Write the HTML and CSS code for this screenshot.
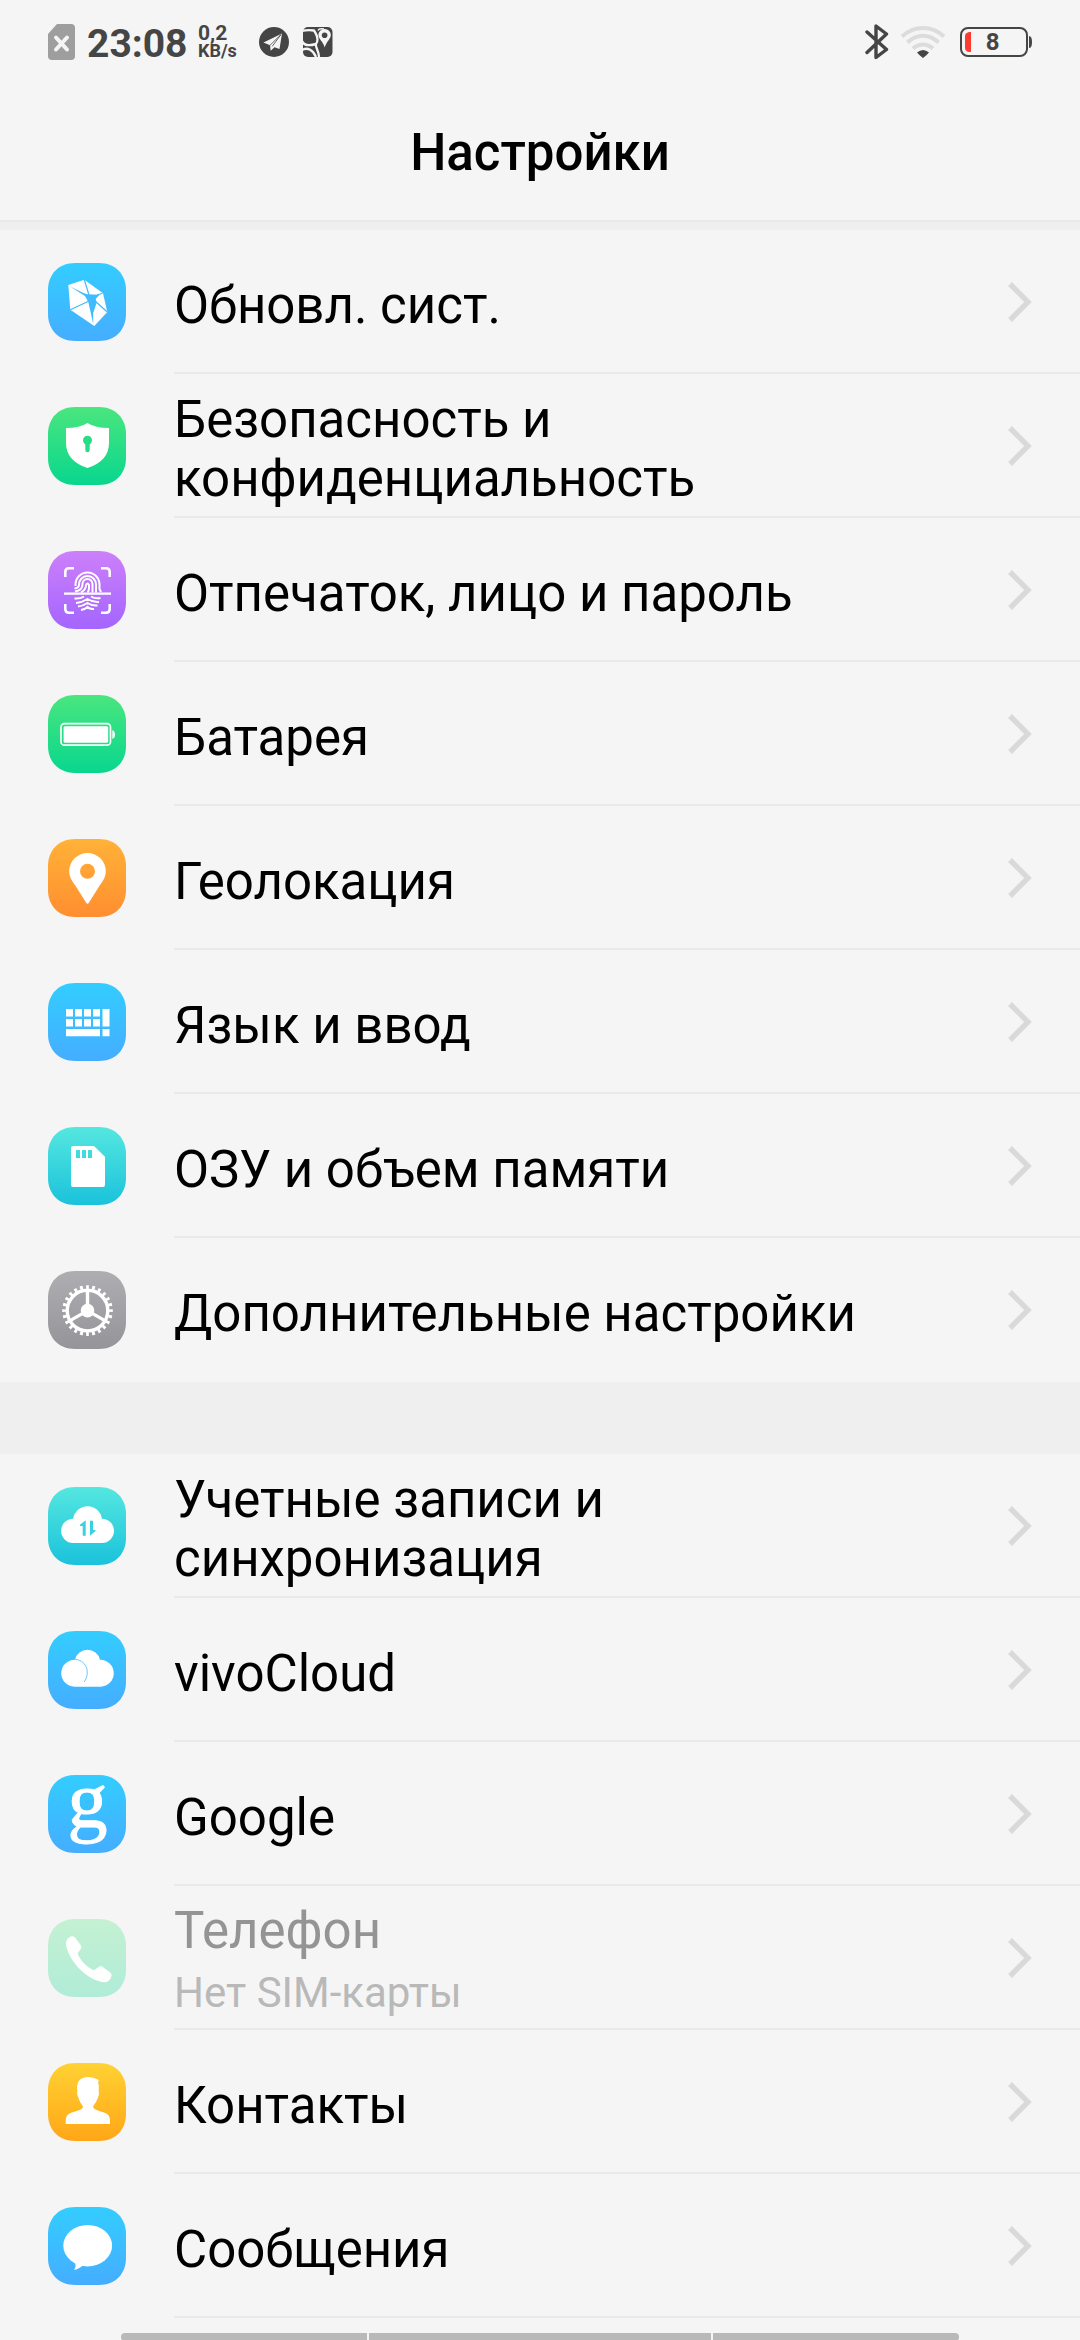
FILE: index.html
```
<!DOCTYPE html>
<html lang="ru">
<head>
    <meta charset="UTF-8">
    <meta name="viewport" content="width=device-width, initial-scale=1.0">
    <title>Настройки</title>
    <link rel="stylesheet" href="styles.css">
</head>
<body>
    <!-- shared shapes and gradients -->
    <svg class="defs" width="0" height="0">
        <defs>
            <linearGradient id="blue" x1="0" y1="0" x2="0" y2="1"><stop offset="0" stop-color="#33cdff"/><stop offset="1" stop-color="#45adff"/></linearGradient>
            <linearGradient id="green" x1="0" y1="0" x2="0" y2="1"><stop offset="0" stop-color="#4ae67e"/><stop offset="1" stop-color="#08d68e"/></linearGradient>
            <linearGradient id="purple" x1="0" y1="0" x2="0" y2="1"><stop offset="0" stop-color="#cc80fa"/><stop offset="1" stop-color="#a465ff"/></linearGradient>
            <linearGradient id="orange" x1="0" y1="0" x2="0" y2="1"><stop offset="0" stop-color="#ffb238"/><stop offset="1" stop-color="#ff8e30"/></linearGradient>
            <linearGradient id="teal" x1="0" y1="0" x2="0" y2="1"><stop offset="0" stop-color="#55e7e0"/><stop offset="1" stop-color="#1ac2db"/></linearGradient>
            <linearGradient id="gray" x1="0" y1="0" x2="0" y2="1"><stop offset="0" stop-color="#aeadb2"/><stop offset="1" stop-color="#959499"/></linearGradient>
            <linearGradient id="yellow" x1="0" y1="0" x2="0" y2="1"><stop offset="0" stop-color="#ffd233"/><stop offset="1" stop-color="#ffa617"/></linearGradient>
            <linearGradient id="pale" x1="0" y1="0" x2="0" y2="1"><stop offset="0" stop-color="#c4f1d2"/><stop offset="1" stop-color="#b0ecd8"/></linearGradient>
            <path id="tile" d="M27 0H51C67 0 78 11 78 27V51C78 67 67 78 51 78H27C11 78 0 67 0 51V27C0 11 11 0 27 0Z"/>
            <path id="arrow" d="M2 2L20 20L2 38" fill="none" stroke="#d9d9d9" stroke-width="5.4"/>
        </defs>
    </svg>

    <div class="status">
        <svg class="sim" width="27" height="36" viewBox="0 0 27 36">
            <path d="M9 0H23Q27 0 27 4V32Q27 36 23 36H4Q0 36 0 32V10Z" fill="#9e9e9e"/>
            <path d="M8 13.5L19 25.5M19 13.5L8 25.5" stroke="#f5f5f5" stroke-width="4" stroke-linecap="round"/>
        </svg>
        <span class="time">23:08</span>
        <div class="speed">
            <span class="num">0,2</span>
            <span class="unit">KB/s</span>
        </div>
        <svg class="telegram" width="30" height="30" viewBox="0 0 30 30">
            <circle cx="15" cy="15" r="15" fill="#454545"/>
            <path d="M4.5 15.5L23 6.5L20.5 22L15.5 20.2L11.7 23.7L11 18.3Z" fill="#f5f5f5"/>
            <path d="M11 18.3L22 7.5L13.2 19.4" fill="none" stroke="#454545" stroke-width="0.8"/>
        </svg>
        <svg class="maps" width="31" height="30" viewBox="0 0 31 30">
            <rect x="1" width="29.5" height="30" rx="5" fill="#454545"/>
            <path d="M0 4C4 3 8 3 12 3.5C15 8 17 13 14 17C13 20 17 24 17 30" fill="none" stroke="#f5f5f5" stroke-width="2.3"/>
            <path d="M0 14C2 19 7 19 14 17M0 23C6 20 11 23 14 30" fill="none" stroke="#f5f5f5" stroke-width="2.4"/>
            <path d="M16 3.5Q17 1 22 2" fill="none" stroke="#f5f5f5" stroke-width="1.5"/>
            <path d="M22.6 2A6 6 0 0 1 28.8 8.2C28.8 12 24.5 14 22.8 20.5C21 14 16.4 12 16.4 8.2A6 6 0 0 1 22.6 2Z" fill="#f5f5f5"/>
            <circle cx="22.6" cy="8.3" r="2.8" fill="#454545"/>
        </svg>

        <svg class="bluetooth" width="24" height="36" viewBox="0 0 24 36">
            <path d="M2 8L21.500 25.500L11 33.500V2L21.500 10L2 28.500" fill="none" stroke="#454545" stroke-width="3.400" stroke-linecap="round" stroke-linejoin="round"/>
        </svg>
        <svg class="wifi" width="46" height="34" viewBox="0 0 46 34">
            <g fill="none" stroke="#dcdcdc" stroke-width="4">
                <path d="M2 11.500C14 0 32 0 44 11.500"/>
                <path d="M7.500 17.500C17 8.500 29 8.500 38.500 17.500"/>
                <path d="M13 23.500C19 18 27 18 33 23.500"/>
            </g>
            <path d="M17 27.500Q23 22.500 29 27.500Q27 30 23 33Q19 30 17 27.500Z" fill="#454545"/>
        </svg>
        <svg class="battery" width="72" height="30" viewBox="0 0 72 30">
            <rect x="1" y="1" width="66" height="28" rx="7" fill="none" stroke="#454545" stroke-width="2"/>
            <path d="M69 9C71 9 72 11 72 15S71 21 69 21Z" fill="#454545"/>
            <path d="M11 5V25H9Q5 24 5 21V9Q5 6 9 5Z" fill="#ff3b30"/>
            <text x="32.700" y="23.300" font-size="24" font-weight="700" text-anchor="middle" fill="#454545">8</text>
        </svg>
    </div>

    <header>
        <h1>Настройки</h1>
    </header>

    <div class="list">
        <div class="row">
            <svg class="icon" viewBox="0 0 78 78">
                <use href="#tile" fill="url(#blue)"/>
                <path d="M20.300 22L36.300 16.800L55 30.300L59.300 49L46.300 63L22.300 46.700Z" fill="#fff"/>
                <path d="M22 23.500L35.500 30L39 31.300L51.500 31.800L47.700 36L48.700 39.500L45.200 50V61L42.600 49L40.300 39L37 33Z" fill="#3dbdff"/>
                <path d="M36.300 16.800L41 32M54.500 30.300L49 32M59 48.700L47 38M22.300 46.700L41 38" stroke="#3dbdff" stroke-width="1.200"/>
            </svg>
            <div class="text"><p>Обновл. сист.</p></div>
            <svg class="arrow" viewBox="0 0 24 40"><use href="#arrow"/></svg>
        </div>
        <div class="row">
            <svg class="icon" viewBox="0 0 78 78">
                <use href="#tile" fill="url(#green)"/>
                <path d="M39.500 16Q47 21 61 21V36Q61 54 39.500 61Q18 54 18 36V21Q32 21 39.500 16Z" fill="#fff"/>
                <circle cx="39.500" cy="33.300" r="4.500" fill="#27dd86"/>
                <path d="M39.500 34V43" stroke="#27dd86" stroke-width="4.400" stroke-linecap="round"/>
            </svg>
            <div class="text"><p>Безопасность и<br>конфиденциальность</p></div>
            <svg class="arrow" viewBox="0 0 24 40"><use href="#arrow"/></svg>
        </div>
        <div class="row">
            <svg class="icon" viewBox="0 0 78 78">
                <use href="#tile" fill="url(#purple)"/>
                <g fill="none" stroke="#fff" stroke-width="2.500">
                    <path d="M17.300 26V21Q17.300 17.300 21 17.300H26M53 17.300H58Q61.700 17.300 61.700 21V26M61.700 53V58Q61.700 61.700 58 61.700H53M26 61.700H21Q17.300 61.700 17.300 58V53"/>
                    <path d="M16 42.700H63" stroke-width="2.200"/>
                </g>
                <g fill="none" stroke="#fff" stroke-width="2">
                    <path d="M27.500 35V33.500A12 12 0 0 1 51.500 33.500V38L53 41M26.500 37.500Q31 37 31 33.500A8.500 8.500 0 0 1 48 33.500V41.500"/>
                    <path d="M27 40.500Q34.500 39.500 34.500 33A5 5 0 0 1 44.500 33V41.500M33 41.500Q38 38.500 38 34Q39.500 31 41 34V37Q41 40 39.500 41.500"/>
                    <path d="M26.500 47.500Q32 48 36 45.500M43 45.500Q47 48 52.500 47M28 52Q34 51.500 39.500 48Q45 51.500 51 51M30 55.500Q35 55 39.500 52Q44 55 49.500 54.500M33 59Q37 58.500 39.500 56Q42 58.500 46 58"/>
                </g>
            </svg>
            <div class="text"><p>Отпечаток, лицо и пароль</p></div>
            <svg class="arrow" viewBox="0 0 24 40"><use href="#arrow"/></svg>
        </div>
        <div class="row">
            <svg class="icon" viewBox="0 0 78 78">
                <use href="#tile" fill="url(#green)"/>
                <rect x="13" y="28.700" width="49.500" height="21.500" rx="3.500" fill="none" stroke="#fff" stroke-width="1.700"/>
                <rect x="15.600" y="31.200" width="44.600" height="16.500" rx="1.500" fill="#fff"/>
                <path d="M64.300 35Q67 36 67 39.500T64.300 44Z" fill="#fff"/>
            </svg>
            <div class="text"><p>Батарея</p></div>
            <svg class="arrow" viewBox="0 0 24 40"><use href="#arrow"/></svg>
        </div>
        <div class="row">
            <svg class="icon" viewBox="0 0 78 78">
                <use href="#tile" fill="url(#orange)"/>
                <path fill-rule="evenodd" d="M39.500 14A18.300 18.300 0 0 1 57.800 32.300C57.800 38 55 42 52 46L41 63.500Q39.500 66 38 63.500L27 46C24 42 21.200 38 21.200 32.300A18.300 18.300 0 0 1 39.500 14ZM39.500 24.800A7.500 7.500 0 0 0 39.500 39.800A7.500 7.500 0 0 0 39.500 24.800Z" fill="#fff"/>
            </svg>
            <div class="text"><p>Геолокация</p></div>
            <svg class="arrow" viewBox="0 0 24 40"><use href="#arrow"/></svg>
        </div>
        <div class="row">
            <svg class="icon" viewBox="0 0 78 78">
                <use href="#tile" fill="url(#blue)"/>
                <path d="M18 26h7v7.500h-7zM27 26h7v7.500h-7zM36 26h7v7.500h-7zM45 26h7v7.500h-7zM18 36h7v7.500h-7zM27 36h7v7.500h-7zM36 36h7v7.500h-7zM45 36h7v7.500h-7zM54.500 26h7v17.500h-7zM18 46h34v7.300h-34zM54.500 46h7v7.300h-7z" fill="#fff"/>
            </svg>
            <div class="text"><p>Язык и ввод</p></div>
            <svg class="arrow" viewBox="0 0 24 40"><use href="#arrow"/></svg>
        </div>
        <div class="row">
            <svg class="icon" viewBox="0 0 78 78">
                <use href="#tile" fill="url(#teal)"/>
                <path fill-rule="evenodd" d="M25 19H46L57 29.700V58Q57 60 55 60H25Q23 60 23 58V21Q23 19 25 19ZM28 23V31H32V23ZM34 23V31H38V23ZM40 23V31H44V23Z" fill="#fff"/>
            </svg>
            <div class="text"><p>ОЗУ и объем памяти</p></div>
            <svg class="arrow" viewBox="0 0 24 40"><use href="#arrow"/></svg>
        </div>
        <div class="row last">
            <svg class="icon" viewBox="0 0 78 78">
                <use href="#tile" fill="url(#gray)"/>
                <g fill="none" stroke="#fff">
                    <circle cx="39.500" cy="39.600" r="20.300" stroke-width="3.400"/>
                    <circle cx="39.500" cy="39.600" r="23.300" stroke-width="4" pathLength="240" stroke-dasharray="4.600 5.400" stroke-dashoffset="2.300" transform="rotate(-90 39.500 39.600)"/>
                    <path d="M39.500 39.600V19M39.500 39.600L57.300 49.900M39.500 39.600L21.700 49.900" stroke-width="3.400"/>
                </g>
                <circle cx="39.500" cy="39.600" r="6.800" fill="#fff"/>
            </svg>
            <div class="text"><p>Дополнительные настройки</p></div>
            <svg class="arrow" viewBox="0 0 24 40"><use href="#arrow"/></svg>
        </div>
    </div>

    <div class="list">
        <div class="row">
            <svg class="icon" viewBox="0 0 78 78">
                <use href="#tile" fill="url(#teal)"/>
                <path d="M25.200 31.700A14.500 14.500 0 0 1 53.900 31.700A12.150 12.150 0 0 1 53.900 56H25.200A12.150 12.150 0 0 1 25.200 31.700Z" fill="#fff"/>
                <path d="M37.700 33.300V48.700H34.700V39H32V37.700ZM42 33.700H45V43H47.500V44L42 48.700Z" fill="#36d3de"/>
            </svg>
            <div class="text"><p>Учетные записи и<br>синхронизация</p></div>
            <svg class="arrow" viewBox="0 0 24 40"><use href="#arrow"/></svg>
        </div>
        <div class="row">
            <svg class="icon" viewBox="0 0 78 78">
                <use href="#tile" fill="url(#blue)"/>
                <path d="M27 28.700A12.800 12.800 0 0 1 52 28.700A13.500 13.500 0 0 1 52.500 55.700H26.500A13.500 13.500 0 0 1 27 28.700Z" fill="#fff"/>
                <path d="M26 28.300C37 28.300 43.500 40 36.200 51" fill="none" stroke="#6cc8ff" stroke-width="1"/>
            </svg>
            <div class="text"><p>vivoCloud</p></div>
            <svg class="arrow" viewBox="0 0 24 40"><use href="#arrow"/></svg>
        </div>
        <div class="row">
            <svg class="icon" viewBox="0 0 78 78">
                <use href="#tile" fill="url(#blue)"/>
                <text class="g" x="39.500" y="51.500" text-anchor="middle">g</text>
            </svg>
            <div class="text"><p>Google</p></div>
            <svg class="arrow" viewBox="0 0 24 40"><use href="#arrow"/></svg>
        </div>
        <div class="row off">
            <svg class="icon" viewBox="0 0 78 78">
                <use href="#tile" fill="url(#pale)"/>
                <path d="M21.500 18.200Q24.500 16 27 18.500L33 26.500Q34 28.300 32.800 29.800L29.500 34.800C33 42 39 48.500 46 51.300L51 47.800Q52.500 46.500 54 47.500L62 53.200Q64.300 55 63.200 58Q61 63.500 56 63.200C40 61.500 22 44 18 26.500Q17.200 21 21.500 18.200Z" fill="#fff"/>
            </svg>
            <div class="text"><p>Телефон</p><p class="sub">Нет SIM-карты</p></div>
            <svg class="arrow" viewBox="0 0 24 40"><use href="#arrow"/></svg>
        </div>
        <div class="row">
            <svg class="icon" viewBox="0 0 78 78">
                <use href="#tile" fill="url(#yellow)"/>
                <path d="M29.300 28C28 19 32 14 40 14Q45 14 51 17L50 19Q51.500 23 50.700 28Q51.700 31 50 34.500Q48.500 39 45 43.500Q45.500 46 50 47.500C58 50 62 51 62 58V61H17.700V58C17.700 51 22 50 30 47.500Q35 46 35 43.500Q31.500 39 30.300 34.500Q28.300 31 29.300 28Z" fill="#fff"/>
            </svg>
            <div class="text"><p>Контакты</p></div>
            <svg class="arrow" viewBox="0 0 24 40"><use href="#arrow"/></svg>
        </div>
        <div class="row">
            <svg class="icon" viewBox="0 0 78 78">
                <use href="#tile" fill="url(#blue)"/>
                <ellipse cx="39.700" cy="38.700" rx="24.400" ry="20.700" fill="#fff"/>
                <path d="M26 54Q29 58.500 26 63Q32 61.500 35 58L40 56Z" fill="#fff"/>
            </svg>
            <div class="text"><p>Сообщения</p></div>
            <svg class="arrow" viewBox="0 0 24 40"><use href="#arrow"/></svg>
        </div>
    </div>

    <div class="navbar">
        <span></span>
        <span class="wide"></span>
        <span></span>
    </div>
</body>
</html>
```
FILE: styles.css
```
body {
    width: 1080px;
    height: 2340px;
    margin: 0;
    background-color: #f5f5f5;
    font-family: Roboto, "Noto Sans", sans-serif;
    color: #000;
    position: relative;
    overflow: hidden;
}
p, h1 {
    margin: 0;
    font-weight: 400;
}
.defs {
    display: block;
}

/* status bar */
.status {
    display: flex;
    align-items: center;
    height: 84px;
    padding: 0 48px;
    color: #454545;
    font-weight: 700;
}
.time {
    width: 97px;
    margin-left: 12px;
    font-size: 39px;
    line-height: 46px;
    padding-top: 3px;
    white-space: nowrap;
}
.speed {
    display: flex;
    flex-direction: column;
    width: 61px;
    margin-left: 14px;
}
.num {
    font-size: 21px;
    line-height: 18px;
}
.unit {
    font-size: 18px;
    line-height: 18px;
}
.maps {
    margin-left: 13px;
}
.bluetooth {
    margin-left: auto;
}
.wifi {
    margin-left: 11px;
}
.battery {
    margin-left: 14px;
}

header {
    height: 136px;
    border-bottom: 2px solid #e9e9e9;
    text-align: center;
}
h1 {
    padding-top: 39px;
    font-size: 51px;
    font-weight: 500;
    line-height: 60px;
}

/* settings */
.list {
    margin-top: 8px;
    background-color: #f5f5f5;
    box-shadow: 0 -8px 0 #efefef;
}
.list + .list {
    margin-top: 72px;
    box-shadow: 0 -72px 0 #efefef;
}
.row {
    display: flex;
    align-items: center;
    height: 144px;
    padding-left: 48px;
    padding-right: 48px;
    background: linear-gradient(#e9e9e9, #e9e9e9) 174px 142px no-repeat;
    background-size: 906px 2px;
}
.last {
    background: none;
}
.icon {
    width: 78px;
    height: 78px;
    flex-shrink: 0;
}
.text {
    flex: 1;
    margin-left: 48px;
    padding-top: 6px;
    font-size: 51px;
    line-height: 59px;
    white-space: nowrap;
}
.off .text {
    padding-top: 5px;
    color: #949494;
}
.off .sub {
    margin-top: 5px;
    font-size: 42px;
    line-height: 56px;
    color: #b9b9b9;
}
.arrow {
    width: 24px;
    height: 40px;
}
.g {
    font-family: "Liberation Serif", serif;
    font-size: 80px;
    fill: #fff;
    stroke: #fff;
    stroke-width: 1px;
}

/* bottom gesture bar, drawn over the list */
.navbar {
    position: absolute;
    left: 121px;
    bottom: -1px;
    width: 838px;
    height: 8px;
    display: flex;
    gap: 2px;
}
.navbar span {
    width: 246px;
    background-color: #b9b9b9;
}
.navbar .wide {
    width: 342px;
}
.navbar span:first-child {
    border-radius: 4px 0 0 4px;
}
.navbar span:last-child {
    border-radius: 0 4px 4px 0;
}
```
